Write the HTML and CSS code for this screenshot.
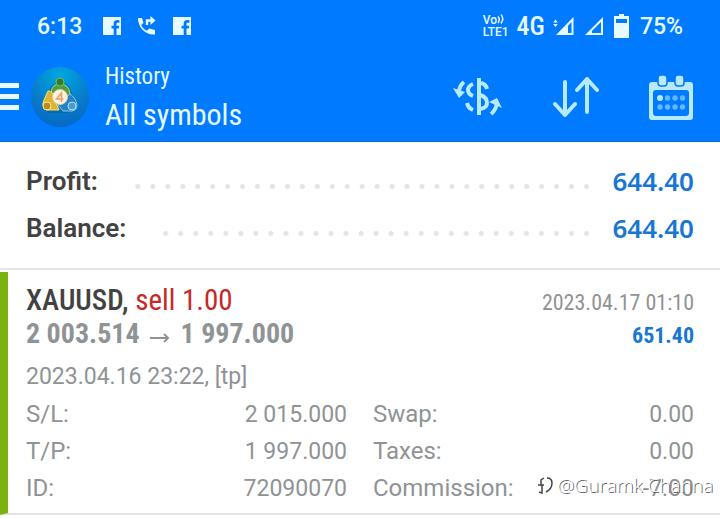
FILE: index.html
```html
<!DOCTYPE html>
<html lang="en">
<head>
	<meta charset="utf-8">
	<title>History - All symbols</title>
	<meta name="viewport" content="width=device-width, initial-scale=1.0">
	<link rel="stylesheet" href="styles.css">
</head>
<body>
	<div class="top">
		<div class="statusbar">
			<span class="clock">6:13</span>
			<svg class="notice" width="18" height="18" viewBox="0 0 18 18"><path fill="#e6faff" fill-rule="evenodd" d="M0 0h18v18h-4.500v-6.500h2.300l.4-2.700h-2.700V7.200c0-.9.4-1.400 1.400-1.400h1.500V3.300c-4-.7-5.700.6-5.700 3.500v2H8.500v2.700h2.200V18H0z"/></svg>
			<svg class="notice" width="20" height="22" viewBox="0 0 20 22"><path fill="#e6faff" d="M1 3h4l1.500 5-2.300 2c1.300 2.800 3 4.500 5.800 5.800l2.200-2.300 5.800 1.500v4.500C9 20.500 1 13 1 3z"/><path fill="none" stroke="#e6faff" stroke-width="2.400" d="M10 10V5.500h5"/><path fill="#e6faff" d="M13.500 1l5 4.500-5 4.500z"/></svg>
			<svg class="notice" width="18" height="18" viewBox="0 0 18 18"><path fill="#e6faff" fill-rule="evenodd" d="M0 0h18v18h-4.500v-6.500h2.300l.4-2.700h-2.700V7.200c0-.9.4-1.400 1.400-1.400h1.500V3.300c-4-.7-5.700.6-5.700 3.500v2H8.500v2.700h2.200V18H0z"/></svg>
			<div class="network">
				<span class="volte"><span class="vo">Vo<svg width="9" height="10" viewBox="0 0 9 10"><path fill="none" stroke="#e6faff" stroke-width="1.500" d="M1 2.500q2.500 3 0 6.500M4 .5q3.500 4 0 9"/></svg></span><span>LTE1</span></span>
				<span class="type">4G</span>
				<svg width="21" height="19" viewBox="0 0 21 19"><path fill="#e6faff" d="M2.500 2.500l2.300 3H.2zM2.500 10L.2 7h4.600z"/><path fill="#e6faff" fill-rule="evenodd" d="M20.500 0v18H3zM18.500 5L15 8.800V16h3.500z"/></svg>
				<svg class="sim" width="18" height="18" viewBox="0 0 18 18"><path fill="none" stroke="#e6faff" stroke-width="2" d="M17 2.500V17H2.500z"/><path fill="#e6faff" d="M2.500 17L7 12.500V17z"/></svg>
				<svg class="cell" width="15" height="24" viewBox="0 0 15 24"><path fill="#e6faff" fill-rule="evenodd" d="M5 0h5v2h5v22H0V2h5zM2 5v4h11V5z"/></svg>
				<span class="battery">75%</span>
			</div>
		</div>
		<header class="header">
			<button class="menu" aria-label="Menu"><i></i><i></i><i></i></button>
			<svg class="logo" width="58" height="60" viewBox="0 0 58 60">
				<defs>
					<radialGradient id="sky" cx=".5" cy=".15" r=".9"><stop offset="0" stop-color="#00a8e2"/><stop offset=".6" stop-color="#087bc8"/><stop offset="1" stop-color="#0565c5"/></radialGradient>
				</defs>
				<ellipse cx="29" cy="30" rx="29" ry="30" fill="url(#sky)"/>
				<path fill="#075c94" d="M11 41l9-22 9-6 9 6 9 20-9 7H18z" opacity=".5"/>
				<path fill="#4ba044" stroke="#b5dc77" d="M20 27q0-10 9-10t10 10l-2 5H21z"/>
				<path fill="#e0b234" stroke="#f5e477" d="M17 24q5 0 5 5l6 14H15q-5-4-2-10z"/>
				<path fill="#2381c5" stroke="#85cee7" d="M39 27q6 4 7 11 0 5-5 6H32l-5-6z"/>
				<circle cx="29" cy="15" r="4" fill="#2f7d3a" stroke="#79bb58"/>
				<circle cx="16" cy="39" r="4" fill="#b98b20" stroke="#f6ed91"/>
				<circle cx="41" cy="39" r="4" fill="#4b9bd0" stroke="#b1e1ec"/>
				<circle cx="29" cy="30" r="7.500" fill="#fff3e3" stroke="#e7c8a5"/>
				<path fill="none" stroke="#e7a36d" stroke-width="1.600" d="M30.500 35v-9l-5 6h7"/>
			</svg>
			<div class="titles">
				<div class="section">History</div>
				<h1>All symbols</h1>
			</div>
			<div class="tools">
				<button aria-label="Symbols">
					<svg width="50" height="40" viewBox="0 0 50 40" fill="none" stroke="#b8eaff">
						<path stroke-width="4" d="M26 1v37"/>
						<path stroke-width="4" d="M20 7q-5 2-5 6 0 4 5 6M28 6q5 1 6 6M14 26q1 5 6 7M27 18q7 2 7 8 0 5-7 6"/>
						<path stroke-width="4" d="M11 5Q7 8 6 14M38 37q5-4 6-11"/>
						<path fill="#b8eaff" stroke="none" d="M0 11l12 4-6 6zM36 25l8-4 5 10z"/>
					</svg>
				</button>
				<button aria-label="Sort">
					<svg width="46" height="42" viewBox="0 0 46 42" fill="none" stroke="#b8eaff" stroke-width="4" stroke-linecap="round" stroke-linejoin="round"><path d="M12 6v33M2 28l10 11 10-11M34 36V3M24 14L34 3l10 11"/></svg>
				</button>
				<button aria-label="Period">
					<svg width="44" height="46" viewBox="0 0 44 46">
						<path fill="#b8eaff" fill-rule="evenodd" d="M3 8h38q3 0 3 3v32q0 3-3 3H3q-3 0-3-3V11q0-3 3-3zm4 8q-3 0-3 3v20q0 3 3 3h30q3 0 3-3V19q0-3-3-3z"/>
						<g fill="#b8eaff" stroke="#0479f7" stroke-width="1.500"><rect x="9" y="1" width="9" height="11" rx="3"/><rect x="26" y="1" width="9" height="11" rx="3"/></g>
						<circle cx="11" cy="24" r="3" fill="#b8eaff"/>
						<g fill="#62b7ff"><circle cx="18.500" cy="24" r="2.700"/><circle cx="26" cy="24" r="2.700"/><circle cx="33.500" cy="24" r="2.700"/><circle cx="11" cy="33" r="2.700"/><circle cx="18.500" cy="33" r="2.700"/><circle cx="26" cy="33" r="2.700"/><circle cx="33.500" cy="33" r="2.700"/></g>
					</svg>
				</button>
			</div>
		</header>
	</div>

	<dl class="summary">
		<div><dt>Profit:</dt><dd>644.40</dd></div>
		<div><dt>Balance:</dt><dd>644.40</dd></div>
	</dl>

	<div class="deal">
		<div class="line">
			<h2>XAUUSD, <span class="sell">sell 1.00</span></h2>
			<span class="closed">2023.04.17 01:10</span>
		</div>
		<div class="line">
			<span class="prices">2 003.514 <svg width="20" height="10" viewBox="0 0 20 10"><path fill="none" stroke="#8f9395" stroke-width="2" d="M0 5h18M14 1l4 4-4 4"/></svg> 1 997.000</span>
			<span class="profit">651.40</span>
		</div>
		<div class="opened">2023.04.16 23:22, [tp]</div>
		<dl class="details">
			<div><dt>S/L:</dt><dd>2 015.000</dd></div>
			<div><dt>Swap:</dt><dd>0.00</dd></div>
			<div><dt>T/P:</dt><dd>1 997.000</dd></div>
			<div><dt>Taxes:</dt><dd>0.00</dd></div>
			<div><dt>ID:</dt><dd>72090070</dd></div>
			<div><dt>Commission:</dt><dd>-7.00</dd></div>
		</dl>
		<div class="watermark">
			<svg width="15" height="17" viewBox="0 0 15 17"><path fill="none" stroke="#444" stroke-width="1.500" d="M6 1L3 3v5M0 8h6M4 8v8l-3-1M9 1q5 0 5 5 0 6-6 9"/></svg>
			<span>@Guramk Channa</span>
		</div>
	</div>
</body>
</html>
```
FILE: styles.css
```css
* {
	margin: 0;
	padding: 0;
	box-sizing: border-box;
}
body {
	background: #fff;
	color: #8f9395;
	font-family: "Roboto Condensed", Roboto, sans-serif;
}
button {
	border: 0;
	background: none;
}
svg {
	display: block;
}

.top {
	background: #007aff;
	color: #e6faff;
	border-bottom: 1px solid #0b6cd8;
}
.statusbar {
	display: flex;
	align-items: center;
	height: 52px;
	padding: 0 37px;
	font-family: Roboto, sans-serif;
	font-size: 23px;
	font-weight: 500;
}
.clock {
	margin-right: 5px;
}
.notice {
	margin-left: 16px;
}
.network {
	display: flex;
	align-items: center;
	gap: 8px;
	margin-left: auto;
}
.volte {
	font-size: 12px;
	line-height: 12px;
}
.volte > span {
	display: block;
}
.volte .vo {
	display: flex;
}
.type {
	font-family: "Roboto Condensed", Roboto, sans-serif;
	font-size: 26px;
	font-weight: 500;
}
.sim,
.cell,
.battery {
	margin-left: 3px;
}

.header {
	display: flex;
	align-items: center;
	height: 89px;
	padding-right: 27px;
}
.menu {
	display: flex;
	flex-direction: column;
	gap: 6px;
	width: 19px;
	margin-right: 12px;
}
.menu i {
	width: 19px;
	height: 5px;
	background: #e6faff;
}
.titles {
	margin-left: 16px;
	padding-top: 2px;
}
.section {
	font-size: 23px;
	line-height: 34px;
}
h1 {
	font-size: 30px;
	font-weight: 400;
	line-height: 42px;
}
.tools {
	display: flex;
	align-items: center;
	gap: 50px;
	margin-left: auto;
}

.summary {
	padding: 16px 26px;
	border-bottom: 2px solid #e4e4e4;
	font-family: Roboto, sans-serif;
	font-size: 26px;
	line-height: 47px;
}
.summary div {
	display: flex;
	align-items: center;
}
.summary dt {
	color: #424242;
	font-weight: 600;
}
/* dotted leader between label and value */
.summary div::before {
	content: "";
	order: 1;
	flex: 1;
	height: 5px;
	margin: 10px 18px 0 32px;
	background: radial-gradient(circle, #e4e4e4 2px, transparent 3px) right / 15px 5px;
	background-repeat: round no-repeat;
}
.summary dd {
	order: 2;
	color: #1976d2;
	font-family: "Noto Sans", sans-serif;
	font-weight: 600;
	font-size: 26px;
}

.deal {
	position: relative;
	margin-top: 2px;
	padding: 13px 26px 6px 18px;
	border-left: 8px solid #7cb210;
	border-bottom: 2px solid #e4e4e4;
}
.line {
	display: flex;
	justify-content: space-between;
	align-items: baseline;
	line-height: 31px;
}
h2 {
	color: #424242;
	font-size: 29px;
	font-weight: 500;
}
.sell {
	color: #c62828;
	font-weight: 400;
}
.closed {
	font-size: 22px;
}
.prices {
	font-size: 28px;
	font-weight: 700;
}
.prices svg {
	display: inline-block;
	margin: 0 4px;
}
.profit {
	color: #1976d2;
	font-size: 22px;
	font-weight: 700;
}
.opened {
	margin-top: 6px;
	font-family: Roboto, sans-serif;
	font-size: 23px;
	line-height: 39px;
}
.details {
	display: grid;
	grid-template-columns: 1fr 1fr;
	column-gap: 26px;
	font-family: Roboto, sans-serif;
	font-size: 24px;
	line-height: 37px;
}
.details div {
	display: flex;
	justify-content: space-between;
}
.details dd {
	font-size: 23px;
}

.watermark {
	position: absolute;
	right: 7px;
	bottom: 16px;
	display: flex;
	align-items: center;
	gap: 4px;
	color: #fff;
	font-family: "Open Sans", sans-serif;
	font-size: 19px;
	font-weight: 300;
	line-height: 24px;
	text-shadow: 1px 1px 0 #555;
}
```
